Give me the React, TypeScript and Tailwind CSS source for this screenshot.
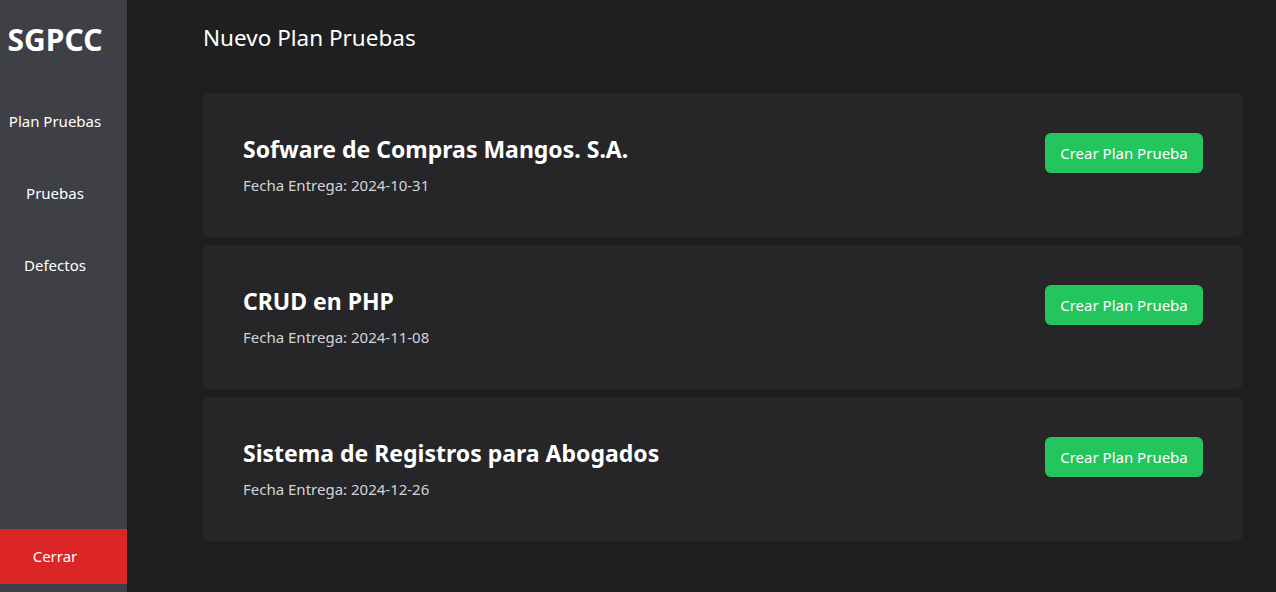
import React from "react";

const projects = [
  { name: "Sofware de Compras Mangos. S.A.", date: "2024-10-31" },
  { name: "CRUD en PHP", date: "2024-11-08" },
  { name: "Sistema de Registros para Abogados", date: "2024-12-26" },
];

export default function App() {
  return (
    <div
      className="flex h-[592px] w-full bg-[#1f1f1f] text-white"
      style={{ fontFamily: '"Noto Sans", "Open Sans", sans-serif' }}
    >
      <aside className="flex w-[127px] shrink-0 flex-col bg-[#3f3f46]">
        <div className="pr-[17px] pt-[22px] text-center text-[30px] font-bold leading-[36px]">SGPCC</div>
        <nav className="mt-[51px] flex flex-col gap-[48px] pr-[17px] text-center text-[15px] leading-[24px]">
          <a className="block">Plan Pruebas</a>
          <a className="block">Pruebas</a>
          <a className="block">Defectos</a>
        </nav>
        <div className="flex-1" />
        <button className="mb-[8px] h-[55px] w-full bg-[#dc2626] pr-[17px] text-[15px] text-white">Cerrar</button>
      </aside>
      <main className="flex-1 pl-[76px] pr-[33px] pt-[22px]">
        <h1 className="text-[22.5px] font-normal leading-[32px]">Nuevo Plan Pruebas</h1>
        <div className="mt-[39px] flex flex-col gap-[8px]">
          {projects.map((p) => (
            <div
              key={p.name}
              className="flex h-[144px] items-start justify-between rounded-md bg-[#262628] px-10 pt-10"
            >
              <div>
                <h2 className="text-[23px] font-bold leading-[32px]">{p.name}</h2>
                <p className="mt-2 text-[15px] leading-[24px] text-[#d4d4d8]">Fecha Entrega: {p.date}</p>
              </div>
              <button className="h-10 w-[158px] rounded-md bg-[#22c55e] text-[15px] text-white">
                Crear Plan Prueba
              </button>
            </div>
          ))}
        </div>
      </main>
    </div>
  );
}
